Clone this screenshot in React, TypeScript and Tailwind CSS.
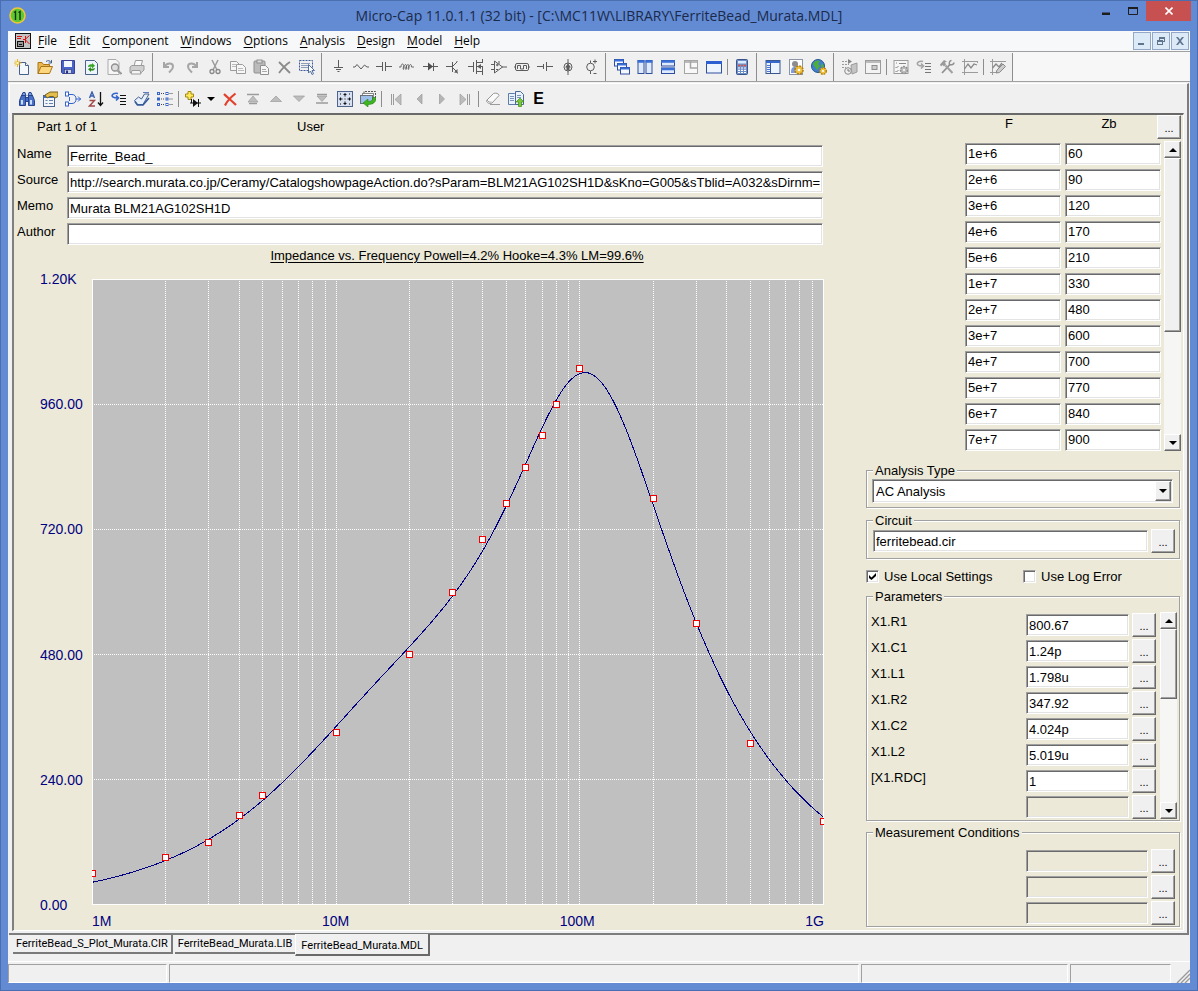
import React from 'react';

const SUNKEN =
  'border border-t-[#a0a0a0] border-l-[#a0a0a0] border-r-white border-b-white shadow-[inset_1px_1px_0_#696969,inset_-1px_-1px_0_#e3e3e3]';
const RAISED =
  'border border-t-white border-l-white border-r-[#696969] border-b-[#696969] shadow-[inset_-1px_-1px_0_#a0a0a0] bg-[#f0f0f0]';

const G = '#9b9b9b';
const D = '#5c5c5c';
const B = '#2f4f9e';

// 16x16 toolbar glyphs
const icons: Record<string, React.ReactNode> = {
  new: (
    <>
      <path d="M5.5 3.5h6l3 3v9h-9z" fill="#f4f8fd" stroke="#45618c" />
      <path d="M11.5 3.5v3h3" fill="#fff" stroke="#45618c" />
      <path d="M3.500 0v8M0 4h7.500M1 1.500l5 5M6 1.500l-5 5" stroke="#e8b421" />
      <rect x="2.500" y="3" width="2" height="2" fill="#fff6b0" />
    </>
  ),
  open: (
    <>
      <path d="M1 14.500V3.500h4l1.500 2h6v3" fill="#e9b74b" stroke="#a8751a" />
      <path d="M1 14.500l3-7h11.500l-3 7z" fill="#fbd67c" stroke="#a8751a" />
      <path d="M9 2.500c2-1.500 4-1 5 1M14.500 1v3h-3" fill="none" stroke="#3c5f8e" />
    </>
  ),
  save: (
    <>
      <path d="M1.500 1.500h13v13h-12l-1-1z" fill="#4a63c8" stroke="#3a3f98" />
      <rect x="4" y="2" width="8" height="6" fill="#f2f6ff" />
      <rect x="4.500" y="10.500" width="7" height="4" fill="#ccd3e2" stroke="#26327f" strokeWidth=".6" />
      <rect x="6" y="11.500" width="2" height="3" fill="#26327f" />
    </>
  ),
  revert: (
    <>
      <path d="M2.500 1.500h9l3 3v11h-12z" fill="#eef4fc" stroke="#4a638c" />
      <path d="M5 8c0-2 2-3 4-2.500V4l3 2.800L9 9.500V8C7.500 7.500 6.500 8 5 8z" fill="#37a624" />
      <path d="M12 9c0 2-2 3-4 2.500V13L5 10.300 8 8v1.500c1.500.5 2.500 0 4-.5z" fill="#2a8b1b" />
    </>
  ),
  preview: (
    <>
      <path d="M2 .5h8l3 3v12H2z" fill="#f6f6f6" stroke="#aaa" />
      <circle cx="9" cy="8.500" r="3.500" fill="#ddd" stroke="#8f8f8f" strokeWidth="1.300" />
      <path d="M11.500 11.500l4 3.500" stroke="#999" strokeWidth="2" />
    </>
  ),
  print: (
    <>
      <path d="M5 7l1.500-5.500h7L12 7z" fill="#fafafa" stroke={G} />
      <path d="M1 8l2-1.500h12V11l-2.500 2.500H1z" fill="#cfcfcf" stroke={G} />
      <path d="M3 11.500h8l1 3.500H2z" fill="#f4f4f4" stroke={G} />
    </>
  ),
  undo: <path d="M3 3v5h5M3.500 7.500C6 3.500 12 3.500 12 7.500c0 3-2 4-4 6" fill="none" stroke="#a6a6a6" strokeWidth="2" />,
  redo: <path d="M13 3v5H8M12.500 7.500C10 3.500 4 3.500 4 7.500c0 3 2 4 4 6" fill="none" stroke="#a6a6a6" strokeWidth="2" />,
  cut: (
    <>
      <path d="M5 1l5 10M11 1L6 11" stroke={G} strokeWidth="1.500" />
      <circle cx="5" cy="12.500" r="2" fill="none" stroke="#888" strokeWidth="1.300" />
      <circle cx="11" cy="12.500" r="2" fill="none" stroke="#888" strokeWidth="1.300" />
    </>
  ),
  copy: (
    <>
      <path d="M.5 2.500h6l3 3v6h-9z" fill="#f7f7f7" stroke={G} />
      <path d="M6.500 5.500h6l3 3v6h-9z" fill="#f7f7f7" stroke={G} />
      <path d="M2 5.500h4M2 7.500h4M8 9.500h5M8 11.500h6" stroke="#bbb" />
    </>
  ),
  paste: (
    <>
      <rect x="1" y="2" width="11" height="12" rx="1" fill="#bbb" stroke="#8f8f8f" />
      <rect x="4" y="1" width="5" height="3" fill="#ddd" stroke="#8f8f8f" />
      <path d="M7.500 6.500h5l3 3v6h-8z" fill="#f7f7f7" stroke="#8f8f8f" />
      <path d="M9 10.500h4M9 12.500h5" stroke="#aaa" />
    </>
  ),
  del: <path d="M3 3l11 11M14 3C9 6 6 10 3 14" stroke="#8a8a8a" strokeWidth="1.800" fill="none" />,
  select: (
    <>
      <rect x=".5" y="1.500" width="13" height="10" fill="none" stroke="#3c5a9a" strokeDasharray="2 1" />
      <path d="M2 4.500h9M2 6.500h7M2 8.500h7" stroke="#8e9db9" />
      <path d="M9.500 5.500v8.500l2-2 1.500 3.500 1.500-.7-1.500-3.300h2.500z" fill="#fff" stroke="#53719f" />
    </>
  ),
  ground: <path d="M8.500 1v7M4 8.500h9M6 10.500h5M7.500 12.500h2" stroke={D} />,
  resistor: <path d="M0 8h2l2-2.500L8 10l3.500-4L14 8h2" fill="none" stroke={D} />,
  capacitor: <path d="M0 7.500h6M10 7.500h6M6.500 3v9M9.500 3v9" stroke={D} />,
  inductor: (
    <path d="M0 8h2c0-4 3-4 3 0s-1.500 2.500-.5 0 3-4 3 0-1.500 2.500-.5 0 3-4 3 0-1.500 2.500-.5 0 3-4 3 0h2.500" fill="none" stroke={D} strokeWidth=".9" />
  ),
  diode: (
    <>
      <path d="M1 7.500h15M11.500 4v8" stroke={D} />
      <path d="M6 3.500l5 4-5 4z" fill="#4d4d4d" />
    </>
  ),
  npn: (
    <>
      <path d="M1 7.500h6M7.500 3v10M8 7l4-4M8 9l4 4M12 3V2M12.500 13.500v1" stroke={D} fill="none" />
      <path d="M12.500 14v-4l-3.500 3.500z" fill={D} />
    </>
  ),
  mos: (
    <>
      <path d="M0 7.500h5M5.500 3v10M8.500 1v14M9 3.500h5M9 7.500h6M9 12.500h5M14.500 0v4M14.500 7v9" stroke={D} />
      <path d="M9 7.500l4-2.500v5z" fill={D} />
    </>
  ),
  opamp: <path d="M3.500 2v12l8-6zM0 5.500h3M0 10.500h3M11 8h5M5 6h2.500M5 10.500h2M6.200 4.700v2.500M8 2v3" fill="none" stroke={D} />,
  pulse: (
    <>
      <rect x="1.500" y="4.500" width="13" height="7" rx="1.500" fill="none" stroke={D} />
      <path d="M3.500 10v-3.500h3V10h3V6.500h3V10M0 8h1M15 8h1" fill="none" stroke={D} />
    </>
  ),
  battery: <path d="M0 7.500h6M10 7.500h6M6.500 5v5M9.500 3v9" stroke={D} />,
  isource: (
    <>
      <circle cx="8" cy="8" r="4" fill="none" stroke={D} />
      <path d="M8 0v16" stroke={D} />
      <path d="M8 4.500l3 4H5zM6.500 8h3v3h-3z" fill={D} />
    </>
  ),
  vsource: (
    <>
      <circle cx="7.500" cy="8" r="3.800" fill="none" stroke={D} />
      <path d="M7.500 1.500v2.500M7.500 12v3M10 2.500h4M12 .5v4M10.500 14.500h3" stroke={D} />
    </>
  ),
  cascade: (
    <>
      {[[0.5, 0.5], [3.5, 4.5], [6.5, 8.5]].map(([x, y]) => (
        <g key={x}>
          <rect x={x} y={y} width="9" height="6.500" fill="#f5f9ff" stroke={B} />
          <path d={`M${x} ${y + 1}h9`} stroke="#3b6fd8" strokeWidth="2" />
        </g>
      ))}
    </>
  ),
  tileV: (
    <>
      <rect x="1" y="1.500" width="6" height="13" fill="#dfeafc" stroke={B} />
      <rect x="9" y="1.500" width="6" height="13" fill="#dfeafc" stroke={B} />
      <path d="M.5 2.500h7M8.500 2.500h7" stroke="#3b6fd8" strokeWidth="2.500" />
    </>
  ),
  tileH: (
    <>
      <rect x="1.500" y="1.500" width="13" height="5.500" fill="#dfeafc" stroke={B} />
      <rect x="1.500" y="9" width="13" height="5.500" fill="#dfeafc" stroke={B} />
      <path d="M1 2.500h14M1 10h14" stroke="#3b6fd8" strokeWidth="2.500" />
    </>
  ),
  overlap: (
    <>
      <rect x="1.500" y="1.500" width="13" height="13" fill="#f8f8f8" stroke="#a5a5a5" />
      <path d="M7.500 2v7h7M2 3h12" fill="none" stroke="#a5a5a5" strokeWidth="1.500" />
    </>
  ),
  maxi: (
    <>
      <rect x=".5" y="2.500" width="15" height="11.500" fill="#eef4fd" stroke={B} />
      <path d="M0 3.500h16" stroke="#2e5fd0" strokeWidth="3" />
    </>
  ),
  calc: (
    <>
      <rect x="2.500" y=".5" width="11" height="15" rx="1" fill="#6f8fc9" stroke="#39548b" />
      <rect x="4" y="2" width="8" height="2.500" fill="#dceaff" />
      <path d="M4 6.500h8" stroke="#e0503c" strokeWidth="1.600" strokeDasharray="2 1" />
      <path d="M4 9h8M4 11.300h8M4 13.500h8" stroke="#fff" strokeWidth="1.200" strokeDasharray="2 1" />
    </>
  ),
  panel: (
    <>
      <rect x="1" y="1.500" width="14" height="13" fill="#eaf2fd" stroke="#3a568c" />
      <path d="M1 3h14" stroke="#3468cf" strokeWidth="2" />
      <path d="M5.500 4v11" stroke="#3a568c" />
      <path d="M2 6.500h3M2 8.500h3M2 10.500h3M2 12.500h3" stroke="#4a7ae0" />
    </>
  ),
  userGear: (
    <>
      <rect x="1.500" y=".5" width="13" height="15" fill="#fff" stroke="#8b93a5" />
      <path d="M3 14c0-5 1-6 4-6s4 2 4 6z" fill="#7c9be0" />
      <circle cx="7" cy="5" r="3" fill="#8d8d8d" />
      <circle cx="11" cy="11" r="4" fill="#efc23e" stroke="#b07c11" strokeDasharray="2 1.100" strokeWidth="1.500" />
      <circle cx="11" cy="11" r="1.300" fill="#fff" />
    </>
  ),
  globe: (
    <>
      <circle cx="7" cy="7" r="6.500" fill="#3f7fce" stroke="#23558d" />
      <path d="M2 5c2-4 5-4 7-3l-2 3 2 2-3 4-2-3zM11 4l2 3-1 3-2-3z" fill="#4fae3b" />
      <circle cx="12" cy="12" r="3.300" fill="#efc23e" stroke="#b07c11" strokeDasharray="1.700 1" strokeWidth="1.400" />
      <circle cx="12" cy="12" r="1.100" fill="#fff" />
    </>
  ),
  step: (
    <>
      <path d="M0 2.500h7M0 5.500h7M0 8.500h4" stroke={G} strokeDasharray="2 1" />
      <path d="M6 0l4 2.500L6 5z" fill="#858585" />
      <circle cx="6" cy="12" r="3.300" fill="#eee" stroke="#8a8a8a" />
      <path d="M6 10v2h2" stroke="#777" fill="none" />
      <path d="M9 6l6-2v9l-5 2z" stroke={G} fill="#c4c4c4" />
    </>
  ),
  limits: (
    <>
      <rect x=".5" y="1.500" width="15" height="13" fill="#f3f3f3" stroke={G} />
      <path d="M1 3h14" stroke="#bbb" strokeWidth="2" />
      <rect x="7" y="6.500" width="5" height="4" fill="#ccc" stroke="#8c8c8c" />
    </>
  ),
  checkGear: (
    <>
      <rect x="1" y="1.500" width="14" height="13" fill="#f6f6f6" stroke={G} />
      <path d="M3 4h1M6 4.500h7M2.500 8l1 1 2-2M2.500 12l1 1 2-2" fill="none" stroke="#888" />
      <circle cx="11" cy="11" r="3.500" fill="#bbb" stroke="#909090" strokeDasharray="2 1" strokeWidth="1.500" />
      <circle cx="11" cy="11" r="1" fill="#fff" />
    </>
  ),
  stepGray: (
    <>
      <path d="M7 2.500C3 1.500 0 4 2 6c1 1 3 1 5 1M5 4.500L7.500 7 5 9.500" fill="none" stroke="#a5a5a5" strokeWidth="1.600" />
      <path d="M9 4.500h6M9 7.500h6M9 10.500h6M9 13.500h6" stroke="#777" />
    </>
  ),
  tools: (
    <>
      <path d="M3 14L11 5.500" stroke="#8f8f8f" strokeWidth="1.800" />
      <path d="M12.500 1.500c-2 0-2.500 2-2 4 2 .8 4.500 0 4.500-2" stroke="#8f8f8f" fill="none" strokeWidth="1.500" />
      <path d="M13.500 14L6.500 6.500" stroke="#a0a0a0" strokeWidth="2" />
      <path d="M1 5.500L5 1l3 1.500-2 1 1 2-2 2-1.500-1.500L2 7.500z" fill="#9a9a9a" />
    </>
  ),
  plot: (
    <>
      <path d="M2.500 0v16M0 13.500h16M0 2.500h16M15.500 2v2" stroke={G} />
      <path d="M2.500 10L6 5l3 4 3-4 3 1" fill="none" stroke="#888" strokeWidth="1.300" />
    </>
  ),
  plotEdit: (
    <>
      <path d="M2.500 0v16M0 13.500h8M0 2.500h16" stroke={G} />
      <path d="M2.500 9L6 5l3 3 3-4" fill="none" stroke="#888" strokeWidth="1.300" />
      <path d="M6 14l1-3 6-6 2.500 2.500-6 6z" fill="#ccc" stroke="#8a8a8a" />
    </>
  ),
  find: (
    <>
      <path d="M2.500 5L4 1.500h2l1 3.500zM9 5l1-3.500h2L13.500 5z" fill="#7da0e2" stroke="#27438d" />
      <path d="M.5 14.500v-5l2-5h4v10zM9.500 14.500v-10h4l2 5v5zM6.500 6.500h3v4h-3z" fill="#4a70c6" stroke="#27438d" />
      <path d="M3 13.500V9M12 13.500V9" stroke="#c7dbff" strokeWidth="2" />
    </>
  ),
  props: (
    <>
      <rect x="1.500" y="4.500" width="11" height="11" fill="#f2f6fb" stroke="#4a638c" />
      <path d="M1.500 6h11" stroke="#3f6fd0" strokeWidth="2" />
      <path d="M3.500 9.500h2M3.500 12.500h2M7 9.500h4M7 12.500h4" stroke="#6681ad" />
      <path d="M3 4l5-3h8v4.500l-3 1.500-2-1.500H8L5 7z" fill="#e3bd50" stroke="#7d6216" />
    </>
  ),
  gate: (
    <>
      <rect x=".5" y="1" width="3" height="4" fill="#fff" stroke="#3463cf" />
      <rect x=".5" y="11" width="3" height="4" fill="#fff" stroke="#3463cf" />
      <path d="M4 3.500h3c3 0 4 2 4 4.500s-1 4.500-4 4.500H4M11 8h5M13 5.500L15.500 8 13 10.500M4.500 6v4" fill="none" stroke="#3463cf" />
    </>
  ),
  sort: (
    <>
      <path d="M1.500 7L4 1l2.500 6M2.500 5h3" fill="none" stroke="#3a5fae" strokeWidth="1.400" />
      <path d="M1.500 9.500h5l-5 5.500h5.500" fill="none" stroke="#a04848" strokeWidth="1.400" />
      <path d="M12.500 1v13M10 11.500l2.500 3 2.500-3" fill="none" stroke="#111" strokeWidth="1.300" />
    </>
  ),
  goto: (
    <>
      <path d="M7 2.500C3 1.500-.5 4 2 6c1 1 3 1 5 1M5 4.500L7.500 7 5 9.500" fill="none" stroke="#3566cc" strokeWidth="1.700" />
      <path d="M9 4.500h6M9 7.500h6M9 10.500h6M9 13.500h6" stroke="#111" strokeWidth="1.200" />
    </>
  ),
  book: (
    <>
      <path d="M.5 9.500l4-3.500 3 2 3-5h4.500l-2 3.500L9 13.500H3z" fill="#e8f0fb" stroke="#44618f" />
      <path d="M1 10.500L3.500 14H9l6-7" fill="none" stroke="#355a9c" strokeWidth="1.700" />
      <path d="M9 1.500h6" stroke="#5b7fc0" />
    </>
  ),
  list: (
    <>
      {[1.5, 7, 12.5].map((y) => (
        <g key={y}>
          <rect x=".5" y={y} width="2" height="2" fill="none" stroke="#3463cf" />
          <rect x="9" y={y} width="2" height="2" fill="none" stroke="#3463cf" />
          <path d={`M4 ${y + 1}h3M12.500 ${y + 1}h3.500`} stroke="#444" strokeDasharray="1 1" />
        </g>
      ))}
    </>
  ),
  addPart: (
    <>
      <path d="M3 .5h3v2.500h2.500v3H6v2.500H3V6H.500V3H3z" fill="#ffe95a" stroke="#a38a10" />
      <path d="M5 12h11M13.500 8v8M6.500 8v4" stroke="#111" />
      <path d="M8 8l5 4-5 4z" fill="#111" />
    </>
  ),
  redX: <path d="M2 3c3 3 8 7 12 11M13.500 2.500C9 6 5 10 3 14.500" fill="none" stroke="#e2412c" strokeWidth="2.200" />,
  top: (
    <>
      <path d="M2 3.500h12M4 12.500h8" stroke={G} strokeWidth="1.600" />
      <path d="M8 5l5 6H3z" fill="#bdbdbd" stroke={G} strokeWidth=".7" />
    </>
  ),
  up: <path d="M8 5l5.500 5.500h-11z" fill="#bdbdbd" stroke={G} strokeWidth=".7" />,
  down: <path d="M8 10.500L13.500 5h-11z" fill="#bdbdbd" stroke={G} strokeWidth=".7" />,
  bottom: (
    <>
      <path d="M2 12h12M3 3.500h10" stroke={G} strokeWidth="1.600" />
      <path d="M8 10.500L13 5H3z" fill="#bdbdbd" stroke={G} strokeWidth=".7" />
    </>
  ),
  fit: (
    <>
      <rect x=".5" y=".5" width="15" height="15" fill="#d7e1f1" stroke="#4f648c" />
      <path d="M8 2v3.500M8 10.500V14M2 8h3.500M10.500 8H14M6.500 3.500h3M6.500 12.500h3M3.500 6.500v3M12.500 6.500v3" stroke="#111" />
      <path d="M3 3h1M12 3h1M3 13h1M12 13h1M7.500 8h1" stroke="#111" />
    </>
  ),
  refresh: (
    <>
      <path d="M4 2.500V.500h11.500V9" fill="none" stroke="#555" strokeDasharray="2 1" />
      <rect x="2.500" y="2.500" width="11" height="8" fill="#fff" stroke="#888" />
      <rect x=".5" y="4.500" width="12" height="8" fill="#9dc0ea" stroke="#6a6f7c" />
      <path d="M3 12l5-4v2.500c3 0 5-1 5-4h3c0 5-3 7-8 7V16z" fill="#3fb520" stroke="#238312" strokeWidth=".6" />
    </>
  ),
  first: (
    <>
      <path d="M3.500 3v11M5.500 3v11" stroke={G} />
      <path d="M13 3v11L7 8.500z" fill="#bdbdbd" stroke={G} strokeWidth=".7" />
    </>
  ),
  prev: <path d="M11 3v10L6 8z" fill="#b5b5b5" stroke={G} strokeWidth=".7" />,
  next: <path d="M5.500 3v10l5-5z" fill="#b5b5b5" stroke={G} strokeWidth=".7" />,
  last: (
    <>
      <path d="M12.500 3v11M10.500 3v11" stroke={G} />
      <path d="M3 3v11l6-5.500z" fill="#bdbdbd" stroke={G} strokeWidth=".7" />
    </>
  ),
  eraser: (
    <>
      <path d="M1.500 9.500l7-7c2-1 5.500 0 5.500 2l-7 7.500c-2 1.500-5.500 0-5.500-2.500z" fill="#fafafa" stroke="#979797" />
      <path d="M2 9c1 2 3 2.500 4.500 2M5 13.500h10" fill="none" stroke={G} />
    </>
  ),
  exportDoc: (
    <>
      <path d="M.5 2.500h6l2 2v9h-8z" fill="#eaf2fd" stroke="#5c7dab" />
      <path d="M7.500.5h5l3 3v10h-8z" fill="#eaf2fd" stroke="#4a6693" />
      <path d="M2 5.500h4M2 7.500h4M2 9.500h4M9 4.500h4M9 6.500h4" stroke="#7b93bb" />
      <path d="M12 7l4 4h-2.500v4.500h-3V11H8z" fill="#7bc93b" stroke="#3c8a15" strokeWidth=".7" />
    </>
  ),
};

const ToolButton = ({ name }: { name: string }) => (
  <button type="button" aria-label={name} className="w-[23px] h-6 shrink-0 flex items-center justify-center">
    <svg width="16" height="16" viewBox="0 0 16 16" fill="none">
      {icons[name]}
    </svg>
  </button>
);

const Tools = ({ names }: { names: string[] }) => (
  <>
    {names.map((n, i) =>
      n === '|' ? (
        <span key={i} className="w-[5px] shrink-0 flex justify-center">
          <span className="w-px h-4 bg-[#8d8d8d]" />
        </span>
      ) : (
        <ToolButton key={i} name={n} />
      )
    )}
  </>
);

const GROUPS = [
  ['new', 'open', 'save', 'revert', 'preview', 'print'],
  ['undo', 'redo', 'cut', 'copy', 'paste', 'del', 'select'],
  ['ground', 'resistor', 'capacitor', 'inductor', 'diode', 'npn', 'mos', 'opamp', 'pulse', 'battery', 'isource', 'vsource'],
  ['cascade', 'tileV', 'tileH', 'overlap', 'maxi', '|', 'calc'],
  ['panel', 'userGear', 'globe'],
  ['step', 'limits', '|', 'checkGear', 'stepGray', 'tools', 'plot', '|', 'plotEdit'],
];

const MENU = ['File', 'Edit', 'Component', 'Windows', 'Options', 'Analysis', 'Design', 'Model', 'Help'];

const FIELDS = [
  { label: 'Name', value: 'Ferrite_Bead_' },
  {
    label: 'Source',
    value: 'http://search.murata.co.jp/Ceramy/CatalogshowpageAction.do?sParam=BLM21AG102SH1D&sKno=G005&sTblid=A032&sDirnm=A03X',
  },
  { label: 'Memo', value: 'Murata BLM21AG102SH1D' },
  { label: 'Author', value: '' },
];

const DATA = [
  ['1e+6', '60'],
  ['2e+6', '90'],
  ['3e+6', '120'],
  ['4e+6', '170'],
  ['5e+6', '210'],
  ['1e+7', '330'],
  ['2e+7', '480'],
  ['3e+7', '600'],
  ['4e+7', '700'],
  ['5e+7', '770'],
  ['6e+7', '840'],
  ['7e+7', '900'],
];

const POINTS = [
  ...DATA.map(([f, z]) => [Number(f), Number(z)]),
  [8e7, 960],
  [1e8, 1030],
  [2e8, 780],
  [3e8, 540],
  [5e8, 310],
  [1e9, 160],
];

const PARAMS = [
  ['X1.R1', '800.67'],
  ['X1.C1', '1.24p'],
  ['X1.L1', '1.798u'],
  ['X1.R2', '347.92'],
  ['X1.C2', '4.024p'],
  ['X1.L2', '5.019u'],
  ['[X1.RDC]', '1'],
  ['', ''],
];

const PW = 732;
const PH = 626;
const px = (f: number) => (Math.log10(f) - 6) * ((PW - 1) / 3) + 0.5;
const py = (z: number) => PH - 0.5 - (z / 1200) * (PH - 1);

// |Z| of two parallel RLC sections in series with RDC
const impedance = (f: number) => {
  const w = 2 * Math.PI * f;
  let re = 1;
  let im = 0;
  [
    [800.67, 1.24e-12, 1.798e-6],
    [347.92, 4.024e-12, 5.019e-6],
  ].forEach(([r, c, l]) => {
    const g = 1 / r;
    const b = w * c - 1 / (w * l);
    const m = g * g + b * b;
    re += g / m;
    im -= b / m;
  });
  return Math.hypot(re, im);
};

const CURVE = Array.from({ length: 245 }, (_, i) => {
  const f = Math.pow(10, 6 + (i * 3) / 244);
  return `${px(f).toFixed(1)},${py(impedance(f)).toFixed(1)}`;
}).join(' ');

const VLINES = [1e6, 1e7, 1e8].flatMap((d) => [1, 2, 3, 4, 5, 6, 7, 8, 9].map((k) => k * d)).slice(1);

const Chart = () => (
  <svg className="flex-1 min-w-0 h-full bg-[#c0c0c0]" viewBox={`0 0 ${PW} ${PH}`} preserveAspectRatio="none">
    <g stroke="#fff" shapeRendering="crispEdges" strokeDasharray="1 1">
      {VLINES.map((f) => (
        <line key={f} x1={Math.round(px(f) - 0.5) + 0.5} x2={Math.round(px(f) - 0.5) + 0.5} y1="0" y2={PH} />
      ))}
      {[240, 480, 720, 960].map((z) => (
        <line key={z} x1="0" x2={PW} y1={Math.round(py(z) - 0.5) + 0.5} y2={Math.round(py(z) - 0.5) + 0.5} />
      ))}
    </g>
    <rect x=".5" y=".5" width={PW - 1} height={PH - 1} fill="none" stroke="#fff" />
    <polyline points={CURVE} fill="none" stroke="#000080" shapeRendering="crispEdges" />
    <g fill="#fff" stroke="#f00000" shapeRendering="crispEdges">
      {POINTS.map(([f, z]) => (
        <rect key={f} x={Math.round(px(f) - 0.5) - 2.5} y={Math.round(py(z) - 0.5) - 2.5} width="6" height="6" />
      ))}
    </g>
  </svg>
);

const Dots = ({ label }: { label: string }) => (
  <button type="button" aria-label={label} className={`w-6 h-6 shrink-0 text-[11px] leading-4 pt-[2px] ${RAISED}`}>
    ...
  </button>
);

const ScrollBar = ({ thumb }: { thumb: string }) => (
  <div className="w-[17px] flex-1 min-h-0 flex flex-col bg-[#f6f6f4]">
    <button type="button" aria-label="Scroll up" className={`h-[17px] shrink-0 flex items-center justify-center ${RAISED}`}>
      <svg width="8" height="4" viewBox="0 0 8 4"><path d="M4 0l4 4H0z" /></svg>
    </button>
    <div className={`${thumb} ${RAISED}`} />
    <button type="button" aria-label="Scroll down" className={`mt-auto h-[17px] shrink-0 flex items-center justify-center ${RAISED}`}>
      <svg width="8" height="4" viewBox="0 0 8 4"><path d="M4 4l4-4H0z" /></svg>
    </button>
  </div>
);

const Group = ({ title, className = '', children }: { title: string; className?: string; children: React.ReactNode }) => (
  <fieldset className={`mr-px min-w-0 border border-[#a0a0a0] shadow-[1px_1px_0_#fff,inset_1px_1px_0_#fff] ${className}`}>
    <legend className="ml-[6px] px-[2px] h-4 leading-[18px] bg-[#ece9d8]">{title}</legend>
    {children}
  </fieldset>
);

const Check = ({ label, checked, className = '' }: { label: string; checked?: boolean; className?: string }) => (
  <label className={`flex items-center gap-[5px] ${className}`}>
    <span className="relative flex">
      <input type="checkbox" defaultChecked={checked} className={`peer appearance-none w-[13px] h-[13px] bg-white ${SUNKEN}`} />
      <svg className="absolute left-[3px] top-[3px] w-[7px] h-[7px] opacity-0 peer-checked:opacity-100 pointer-events-none" viewBox="0 0 7 7">
        <path d="M0 2l2.500 2.500L7 0v3L2.500 7 0 5z" />
      </svg>
    </span>
    {label}
  </label>
);

const TitleBar = () => (
  <div className="h-[30px] shrink-0 grid grid-cols-[1fr_auto_1fr] items-start">
    <svg className="ml-px mt-[6px]" width="17" height="17" viewBox="0 0 17 17">
      <circle cx="8.500" cy="8.500" r="7.500" fill="#5cc832" stroke="#f3c53a" strokeWidth="1.600" />
      <path d="M5 5.500l1.500-1V13M9.500 5.500l1.500-1V13" fill="none" stroke="#17320d" strokeWidth="1.400" />
    </svg>
    <h1 className="pt-[5px] text-[14px] leading-5 text-[#1b2a4a] font-['Open_Sans',sans-serif] whitespace-nowrap">
      Micro-Cap 11.0.1.1 (32 bit) - [C:\MC11W\LIBRARY\FerriteBead_Murata.MDL]
    </h1>
    <div className="flex justify-end">
      <button type="button" aria-label="Minimize" className="w-[27px] h-5 flex justify-center items-center">
        <svg width="10" height="10" viewBox="0 0 10 10"><path d="M1 6.500h8V9H1z" fill="#1e1e1e" /></svg>
      </button>
      <button type="button" aria-label="Maximize" className="w-[27px] h-5 flex justify-center items-center">
        <svg width="10" height="8" viewBox="0 0 10 8"><path d="M.5 1v6.500h9V1z" fill="none" stroke="#1e1e1e" /><path d="M0 1h10" stroke="#1e1e1e" strokeWidth="2" /></svg>
      </button>
      <button type="button" aria-label="Close" className="w-[45px] h-5 -mr-px flex justify-center items-center bg-[#c75050]">
        <svg width="8" height="8" viewBox="0 0 8 8"><path d="M.5.5l7 7M7.500.5l-7 7" stroke="#fff" strokeWidth="1.600" /></svg>
      </button>
    </div>
  </div>
);

const MenuBar = () => (
  <div className="h-[21px] shrink-0 flex items-center bg-[#f7f8f9] border-b border-[#a0a0a0]">
    <svg className="ml-[7px] mr-px shrink-0" width="16" height="16" viewBox="0 0 16 16">
      <rect x=".5" y=".5" width="15" height="15" fill="#c4c4c4" stroke="#111" />
      <path d="M2 3.500h5M2 5.500h4M8 6.500h2M10.500 3v7M10.500 6l4-3.500M10.500 7l4 4" stroke="#e01010" fill="none" />
      <rect x="2.500" y="8.500" width="6" height="5" fill="#999" stroke="#111" />
      <path d="M4 11.500h3" stroke="#111" />
    </svg>
    <nav className="flex font-['Open_Sans',sans-serif] text-[12px] leading-4">
      {MENU.map((m) => (
        <button key={m} type="button" className="px-[6px]">
          <span className="underline underline-offset-2">{m[0]}</span>
          {m.slice(1)}
        </button>
      ))}
    </nav>
    <div className="ml-auto flex gap-px pr-px">
      {['M4 10h6v2H4z', 'M6 4h6v5h-2v3H4V7h2zM7 6v1h3v1h1V6zM5 9v2h4V9z', 'M4 4h2l2 2.500L10 4h2L9 8l3 4h-2L8 9.500 6 12H4l3-4z'].map((d, i) => (
        <button key={i} type="button" aria-label={['Minimize document', 'Restore document', 'Close document'][i]} className="w-[18px] h-[18px] flex items-center justify-center border border-[#93a8c8] bg-[#dceaf7]">
          <svg width="16" height="16" viewBox="0 0 16 16"><path d={d} fill="#5e7590" fillRule="evenodd" /></svg>
        </button>
      ))}
    </div>
  </div>
);

const Toolbars = () => (
  <>
    <div className="h-[30px] shrink-0 flex bg-[#f7f7f8] border-b border-[#a0a0a0] pt-px overflow-hidden">
      {GROUPS.map((g, i) => (
        <div key={i} className={`flex items-center bg-[#f0f0f0] border-r border-[#8d8d8d] ${i === 0 ? 'pl-[2px] pr-1' : 'pl-1 pr-[3px]'}`}>
          <Tools names={g} />
        </div>
      ))}
    </div>
    <div className="h-[30px] shrink-0 flex items-center pl-[5px] mt-px mx-px border-t border-l border-r-2 border-t-white border-l-white border-r-[#7d7d7d] overflow-hidden">
      <Tools names={['find', 'props', 'gate', 'sort', 'goto', 'book', 'list', '|', 'addPart']} />
      <button type="button" aria-label="Part list" className="w-[14px] h-6 flex items-center justify-center">
        <svg width="8" height="4" viewBox="0 0 8 4"><path d="M4 4l4-4H0z" /></svg>
      </button>
      <Tools names={['redX', 'top', 'up', 'down', 'bottom', 'fit', 'refresh', '|', 'first', 'prev', 'next', 'last', '|', 'eraser', 'exportDoc']} />
      <button type="button" className="w-[23px] h-6 font-bold text-[16px] leading-6">E</button>
    </div>
  </>
);

const PartPanel = () => (
  <section className="flex-1 min-w-0 flex flex-col">
    <div className="h-[30px] pt-1 pl-[23px] flex leading-4">
      <span className="w-[260px]">Part 1 of 1</span>
      <span>User</span>
    </div>
    <div className="flex flex-col gap-1 pl-[3px] pr-px">
      {FIELDS.map((f) => (
        <label key={f.label} className="flex">
          <span className="w-[50px] leading-[18px]">{f.label}</span>
          <input defaultValue={f.value} className={`flex-1 min-w-0 h-[22px] px-[2px] bg-white ${SUNKEN}`} />
        </label>
      ))}
    </div>
    <div className="mt-[3px] pl-[76px] text-center underline underline-offset-2 leading-4">
      Impedance vs. Frequency Powell=4.2% Hooke=4.3% LM=99.6%
    </div>
    <div className="mt-[15px] flex-1 min-h-[400px] flex pl-[26px] text-[#000080] text-[14px]">
      <div className="w-[52px] -my-2 flex flex-col justify-between leading-4">
        {['1.20K', '960.00', '720.00', '480.00', '240.00', '0.00'].map((t) => (
          <span key={t}>{t}</span>
        ))}
      </div>
      <Chart />
    </div>
    <div className="mt-2 mb-px pl-[78px] flex justify-between leading-4 text-[#000080] text-[14px]">
      {['1M', '10M', '100M', '1G'].map((t) => (
        <span key={t}>{t}</span>
      ))}
    </div>
  </section>
);

const SidePanel = () => (
  <aside className="w-[315px] shrink-0 flex flex-col">
    <div className="flex justify-end">
      <table className="w-[200px] table-fixed border-collapse">
        <thead>
          <tr className="h-[26px]">
            <th className="p-0 pb-2 pr-2 font-normal leading-4">F</th>
            <th className="p-0 pb-2 pr-2 font-normal leading-4">Zb</th>
          </tr>
        </thead>
        <tbody>
          {DATA.map((row) => (
            <tr key={row[0]} className="h-[26px]">
              {row.map((v, i) => (
                <td key={i} className="p-0 px-[2px]">
                  <input aria-label={i ? 'Zb' : 'F'} defaultValue={v} className={`block w-full h-[22px] px-[2px] pb-[2px] bg-white ${SUNKEN}`} />
                </td>
              ))}
            </tr>
          ))}
        </tbody>
      </table>
      <div className="w-[18px] flex flex-col items-end gap-[2px] pb-[2px]">
        <Dots label="Edit data" />
        <ScrollBar thumb="h-[174px]" />
      </div>
    </div>

    <Group title="Analysis Type" className="mt-[9px]">
      <div className="relative ml-[5px] mr-[6px] mt-px mb-1">
        <select aria-label="Analysis Type" className={`block w-full h-6 appearance-none px-[3px] pt-px bg-white ${SUNKEN}`}>
          <option>AC Analysis</option>
        </select>
        <span className={`absolute right-[2px] top-[2px] w-4 h-5 flex items-center justify-center pointer-events-none ${RAISED}`}>
          <svg width="8" height="4" viewBox="0 0 8 4"><path d="M4 4l4-4H0z" /></svg>
        </span>
      </div>
    </Group>

    <Group title="Circuit" className="mt-1">
      <div className="flex items-center gap-[3px] ml-[6px] mr-1 mt-px mb-[5px]">
        <input aria-label="Circuit" defaultValue="ferritebead.cir" className={`flex-1 min-w-0 h-[22px] px-[2px] bg-white ${SUNKEN}`} />
        <Dots label="Browse circuit" />
      </div>
    </Group>

    <div className="h-[29px] pt-[6px] flex items-center">
      <Check label="Use Local Settings" checked className="w-[157px]" />
      <Check label="Use Log Error" />
    </div>

    <Group title="Parameters">
      <div className="flex gap-1 pt-2 pr-[2px]">
        <div className="flex-1 min-w-0">
          {PARAMS.map(([name, value], i) => (
            <label key={i} className="h-[26px] flex items-center">
              <span className="flex-1 pl-1 pb-[6px] leading-4">{name}</span>
              <input defaultValue={value} disabled={!name} className={`w-[103px] h-[22px] px-[2px] mr-[3px] ${name ? 'bg-white' : 'bg-[#ece9d8]'} ${SUNKEN}`} />
              <Dots label={`Edit ${name}`} />
            </label>
          ))}
        </div>
        <div className="flex flex-col pb-px">
          <ScrollBar thumb="h-[70px]" />
        </div>
      </div>
    </Group>

    <Group title="Measurement Conditions" className="mt-[3px]">
      <div className="pt-2 pr-1">
        {[0, 1, 2].map((i) => (
          <div key={i} className="h-[26px] flex items-center justify-end gap-[3px]">
            <input aria-label={`Condition ${i + 1}`} disabled className={`w-[122px] h-[22px] bg-[#ece9d8] ${SUNKEN}`} />
            <Dots label={`Edit condition ${i + 1}`} />
          </div>
        ))}
      </div>
    </Group>
  </aside>
);

const DocTabs = () => (
  <div className="h-[26px] shrink-0 flex items-start pl-[5px] text-[11px] leading-4 font-['Roboto',sans-serif]">
    <button type="button" className="h-[19px] pt-px px-[3px] mr-[2px] border-r-2 border-b-2 border-[#7a7a7a] whitespace-nowrap">
      FerriteBead_S_Plot_Murata.CIR
    </button>
    <button type="button" className="h-[19px] pt-px px-[3px] border-b-2 border-[#7a7a7a] whitespace-nowrap">
      FerriteBead_Murata.LIB
    </button>
    <button type="button" className="relative h-[22px] -mt-px pt-1 px-[5px] bg-[#f0f0f0] border-l border-l-white border-r-2 border-b-2 border-r-[#696969] border-b-[#696969] whitespace-nowrap">
      FerriteBead_Murata.MDL
    </button>
  </div>
);

const StatusBar = () => (
  <div className="h-[22px] shrink-0 flex gap-[2px] pt-[2px] border-t border-white">
    <div className="w-[159px] border border-t-[#a0a0a0] border-l-[#a0a0a0] border-r-white border-b-white" />
    <div className="flex-1 border border-t-[#a0a0a0] border-l-[#a0a0a0] border-r-white border-b-white" />
    <div className="w-[207px] border border-t-[#a0a0a0] border-l-[#a0a0a0] border-r-white border-b-white" />
    <div className="w-[101px] border border-t-[#a0a0a0] border-l-[#a0a0a0] border-r-white border-b-white" />
    <div className="w-[17px] flex items-end justify-end">
      <svg width="14" height="14" viewBox="0 0 14 14">
        <path d="M1 14L14 1M5 14l9-9M9 14l5-5" stroke="#9a9a9a" strokeWidth="1.400" />
      </svg>
    </div>
  </div>
);

export default function App() {
  return (
    <div className="h-screen min-h-[760px] min-w-[760px] flex flex-col bg-[#628bd4] border border-[#4a6eb0] px-[7px] pb-[7px] text-black text-[13px] font-['Liberation_Sans',Arial,sans-serif]">
      <TitleBar />
      <div className="flex-1 min-h-0 flex flex-col bg-[#f0f0f0]">
        <MenuBar />
        <Toolbars />
        <main className="flex-1 min-h-0 flex flex-col mx-px border-r-2 border-b-2 border-[#7d7d7d] px-[3px] pb-[2px]">
          <div className="flex-1 min-h-0 flex gap-[42px] pr-[2px] bg-[#ece9d8] border-t-2 border-l-2 border-t-[#696969] border-l-[#808080] border-r border-b border-r-white border-b-white">
            <PartPanel />
            <SidePanel />
          </div>
        </main>
        <DocTabs />
        <StatusBar />
      </div>
    </div>
  );
}
